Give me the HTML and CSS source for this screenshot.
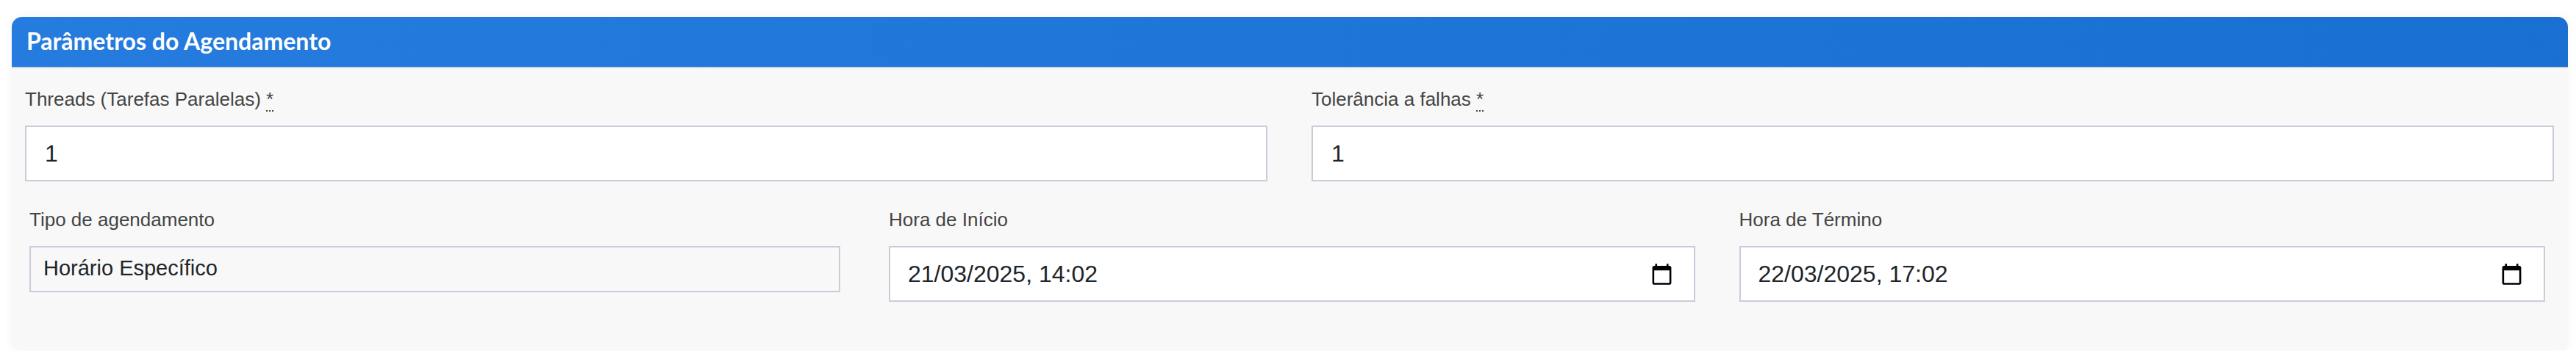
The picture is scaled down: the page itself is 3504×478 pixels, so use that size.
FILE: index.html
```html
<!DOCTYPE html>
<html>
  <head>
    <title>Parâmetros do Agendamento</title>
    <link rel="stylesheet" href="styles.css">
  </head>
  <body>
    <div class="panel">
      <div class="panel-heading">Parâmetros do Agendamento</div>
      <div class="panel-body">
        <div class="row row-top">
          <div class="field">
            <label class="field-label">Threads (Tarefas Paralelas) <abbr>*</abbr></label>
            <input class="text-input" type="text" value="1" />
          </div>
          <div class="field">
            <label class="field-label">Tolerância a falhas <abbr>*</abbr></label>
            <input class="text-input" type="text" value="1" />
          </div>
        </div>
        <div class="row row-schedule">
          <div class="field field-type">
            <label class="field-label">Tipo de agendamento</label>
            <div class="static-input">Horário Específico</div>
          </div>
          <div class="field">
            <label class="field-label">Hora de Início</label>
            <div class="date-input">
              <span>21/03/2025, 14:02</span>
              <svg class="calendar-icon" viewBox="0 0 24 24"><path d="M20 3h-1V1h-2v2H7V1H5v2H4c-1.1 0-2 .9-2 2v16c0 1.1.9 2 2 2h16c1.1 0 2-.9 2-2V5c0-1.1-.9-2-2-2zm0 18H4V8h16v13z"/></svg>
            </div>
          </div>
          <div class="field">
            <label class="field-label">Hora de Término</label>
            <div class="date-input">
              <span>22/03/2025, 17:02</span>
              <svg class="calendar-icon" viewBox="0 0 24 24"><path d="M20 3h-1V1h-2v2H7V1H5v2H4c-1.1 0-2 .9-2 2v16c0 1.1.9 2 2 2h16c1.1 0 2-.9 2-2V5c0-1.1-.9-2-2-2zm0 18H4V8h16v13z"/></svg>
            </div>
          </div>
        </div>
      </div>
    </div>
  </body>
</html>
```

FILE: styles.css
```css
html,
body {
  height: 100%;
}

body {
  background-color: #fff;
  color: #212529;
  font-family: "Liberation Sans", Arial, sans-serif;
  margin: 0;
  padding: 23px 11px 0 16px;
  box-sizing: border-box;
  overflow: hidden;
}

.panel {
  background-color: #f8f8f8;
  border-radius: 14px 14px 8px 8px;
  box-shadow: 0 0 12px rgba(0, 0, 0, 0.05);
  height: 453px;
}

.panel-heading {
  background: linear-gradient(90deg, #267cde, #1a6fd2);
  border-bottom: 2px solid #d3d6da;
  border-radius: 14px 14px 0 0;
  color: #fff;
  font-family: Lato, sans-serif;
  font-size: 32px;
  font-weight: 700;
  height: 68px;
  line-height: 66px;
  padding-left: 20px;
}

.row {
  display: grid;
}

.row-top {
  grid-template-columns: 1fr 1fr;
  column-gap: 60px;
  padding: 24px 19px 0 18px;
}

.row-schedule {
  grid-template-columns: 1109px 1fr 1fr;
  column-gap: 60px;
  padding: 34px 31px 0 24px;
}

.field-type {
  padding-right: 6px;
}

.field-label {
  color: #444;
  display: block;
  font-size: 26px;
  line-height: 36px;
  margin-bottom: 18px;
}

abbr {
  border-bottom: 2px dotted #444;
}

.text-input,
.date-input,
.static-input {
  border: 2px solid #c8cdd9;
  box-sizing: border-box;
  color: #212529;
  font-family: "Liberation Sans", Arial, sans-serif;
}

.text-input {
  background-color: #fff;
  display: block;
  font-size: 32px;
  height: 76px;
  padding: 0 25px;
  width: 100%;
  outline: none;
}

.static-input {
  font-size: 29px;
  height: 63px;
  line-height: 57px;
  padding: 0 17px;
}

.date-input {
  align-items: center;
  background-color: #fff;
  display: flex;
  font-size: 32px;
  height: 76px;
  justify-content: space-between;
  padding: 0 28px 0 24px;
}

.calendar-icon {
  fill: #000;
  height: 31px;
  width: 31px;
}
```
